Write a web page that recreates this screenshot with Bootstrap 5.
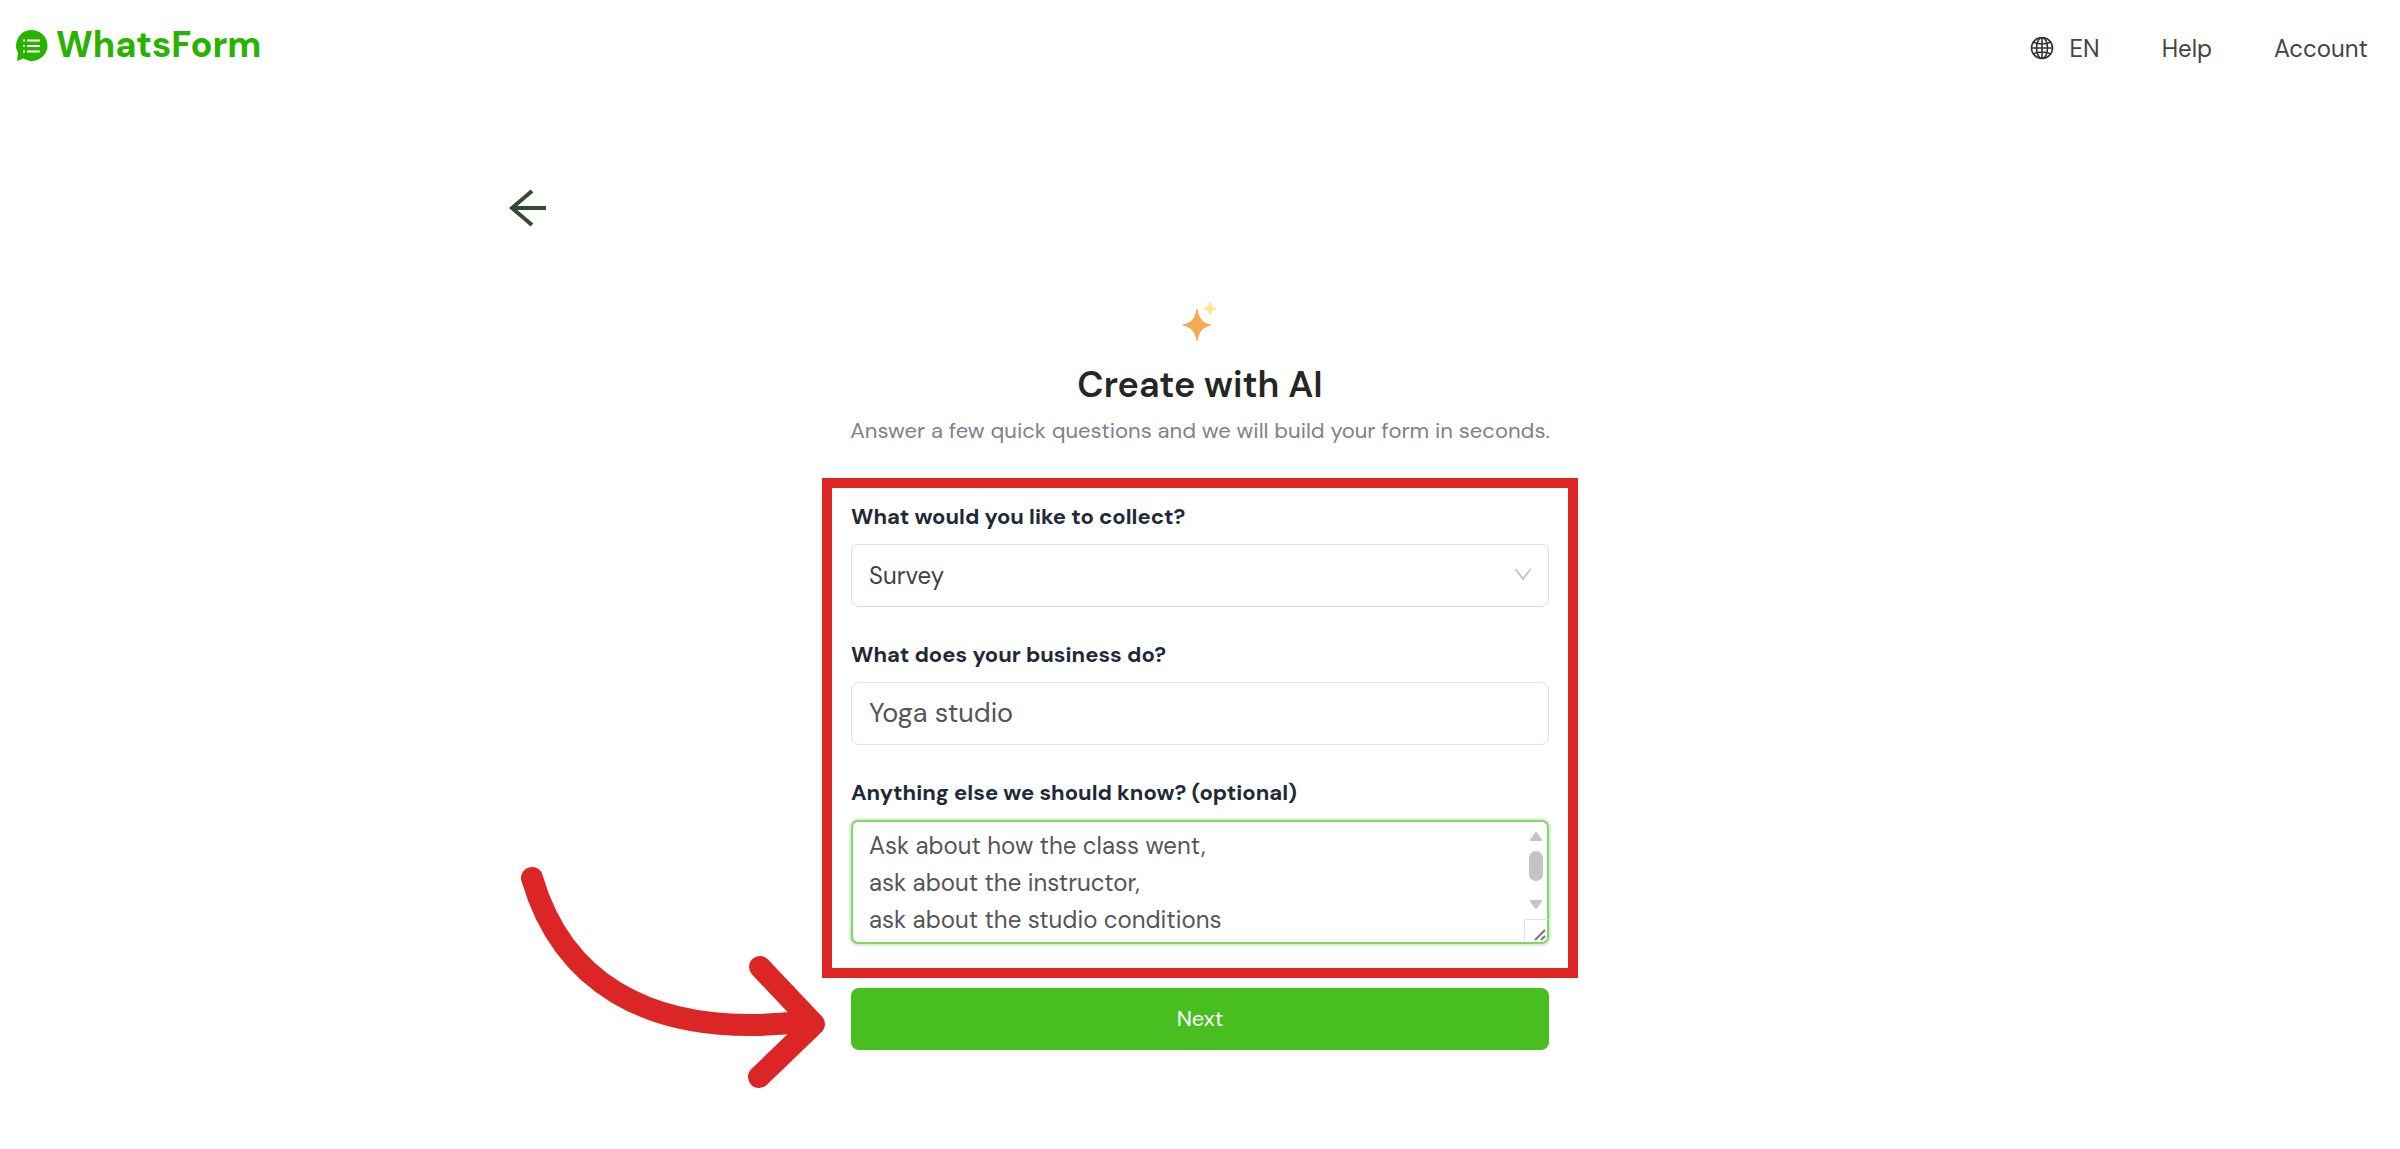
<!DOCTYPE html>
<html lang="en">
<head>
<meta charset="utf-8">
<meta name="viewport" content="width=device-width, initial-scale=1">
<title>WhatsForm - Create with AI</title>
<link href="https://cdn.jsdelivr.net/npm/bootstrap@5.3.0/dist/css/bootstrap.min.css" rel="stylesheet">
<style>
  body { font-family: "DM Sans", Inter, sans-serif; color: #444; background: #fff; font-size: 24px; }
  .site-bar { padding: 22px 32px 0 15px; }
  .brand-name { font-weight: 800; font-size: 36px; line-height: 46px; color: #2ab200; }
  .site-links { gap: 62px; padding-top: 5px; }
  .site-links a { color: #444; line-height: 44px; }
  .page-wrap { max-width: 1392px; padding-top: 109px; padding-bottom: 88px; }
  .wizard { max-width: 756px; }
  .spark { margin-top: 69px; }
  .wizard-title { font-size: 36px; line-height: 44px; font-weight: 600; color: #262626; margin: 20px 0 6px; }
  .wizard-sub { font-size: 22px; line-height: 36px; color: #7c828c; margin: 0 0 29px; white-space: nowrap; }
  .red-frame { border: 10px solid #dc2626; padding: 13px 19px 24px; }
  .field-label { font-size: 22px; line-height: 32px; font-weight: 700; color: #1f2937; margin: 0 0 11px; display: block; }
  .field-block { margin-bottom: 32px; }
  .field-box.form-control, .field-box.form-select { height: 63px; border: 1px solid #dcdcdc; border-radius: 8px; padding: 0 17px; font-size: 24px; color: #404040; box-shadow: none; }
  .field-box.form-select { background-image: none; }
  .field-box.field-large { font-size: 27px; color: #555; border-color: #e4e4e4; padding-bottom: 2px; }
  textarea.field-box.form-control { height: 124px; line-height: 37px; padding: 5px 16px; color: #555; overflow: hidden; resize: none; border: 2px solid #84d46d; border-radius: 7px; box-shadow: 0 0 0 2px #daf2d2; display: block; }
  .caret { right: 17px; top: 24px; pointer-events: none; }
  .scroller { right: 1px; top: 2px; pointer-events: none; }
  .next-btn, .next-btn:hover { background: #49be1f; color: #fff; font-size: 22px; height: 62px; border: 0; border-radius: 8px; padding: 0 0 2px; }
  .next-row { padding: 10px 29px 0; }
  .pointer-arrow { left: -301px; bottom: -38px; pointer-events: none; }
</style>
<script src="https://cdn.jsdelivr.net/npm/bootstrap@5.3.0/dist/js/bootstrap.bundle.min.js"></script>
</head>
<body>
<header class="site-bar d-flex justify-content-between align-items-start">
  <a href="#" class="d-flex align-items-center text-decoration-none gap-2">
    <svg width="33" height="33" viewBox="0 0 33 33" aria-hidden="true">
      <path d="M17 1a15.500 15.500 0 1 1-8.500 28.500L2 32l1-8A15.500 15.500 0 0 1 17 1z" fill="#2ab200"/>
      <path d="M12 11.500H25M12 17H25M12 22.500H25" stroke="#fff" stroke-width="2"/>
      <path d="M8 11.500H10M8 17H10M8 22.500H10" stroke="#fff" stroke-width="2"/>
    </svg>
    <span class="brand-name">WhatsForm</span>
  </a>
  <nav class="site-links d-flex">
    <a href="#" class="d-flex align-items-center text-decoration-none gap-3">
      <svg width="24" height="24" viewBox="0 0 24 24" fill="none" stroke="#333" stroke-width="1.600" aria-hidden="true">
        <circle cx="12" cy="11" r="10.500"/><ellipse cx="12" cy="11" rx="5.500" ry="10.500"/>
        <path d="M12 0v22M1 11h22M3 5q9 4 18 0M3 17q9-4 18 0"/>
      </svg>EN</a>
    <a href="#" class="text-decoration-none">Help</a>
    <a href="#" class="text-decoration-none">Account</a>
  </nav>
</header>

<main class="page-wrap mx-auto">
  <a href="#" class="d-inline-block lh-1 align-top" aria-label="Back">
    <svg class="d-block" width="48" height="48" viewBox="0 0 48 48" fill="none" stroke="#37492f" stroke-width="4" aria-hidden="true"><path d="M28 11L8 28L28 45M7 28H42"/></svg>
  </a>
  <div class="wizard position-relative mx-auto">
    <div class="text-center">
      <svg class="spark d-block mx-auto" width="40" height="46" viewBox="0 0 40 46" aria-hidden="true">
        <path d="M17 12.500C19 22 22 26 30.500 28C22 30.500 19 34 17 43.500C15 34 12 30.500 3 28C12 26 15 22 17 12.500z" fill="#f3aa52" stroke="#f3aa52"/>
        <path d="M30 5C31 9 32 10.500 36 11.500C32 12.500 31 14 30 18C29 14 28 12.500 24 11.500C28 10.500 29 9 30 5z" fill="#fbe77c" stroke="#fbe77c"/>
      </svg>
      <h1 class="wizard-title">Create with AI</h1>
      <p class="wizard-sub">Answer a few quick questions and we will build your form in seconds.</p>
    </div>
    <form>
      <div class="red-frame">
        <div class="field-block">
          <label class="field-label" for="collect">What would you like to collect?</label>
          <div class="position-relative">
            <select id="collect" class="form-select field-box"><option>Survey</option></select>
            <svg class="caret position-absolute" width="18" height="14" viewBox="0 0 18 14" fill="none" stroke="#c4c4c4" stroke-width="1.800" aria-hidden="true"><path d="M1.500 1L9 11L16.500 1"/></svg>
          </div>
        </div>
        <div class="field-block">
          <label class="field-label" for="business">What does your business do?</label>
          <input id="business" type="text" class="form-control field-box field-large" value="Yoga studio">
        </div>
        <div>
          <label class="field-label" for="details">Anything else we should know? (optional)</label>
          <div class="position-relative">
            <textarea id="details" class="form-control field-box" rows="3">Ask about how the class went,
ask about the instructor,
ask about the studio conditions</textarea>
            <svg class="scroller position-absolute" width="24" height="120" viewBox="0 0 24 120" aria-hidden="true">
              <g fill="#c4c4c4" stroke="#c4c4c4" stroke-width="2" stroke-linejoin="round"><path d="M7 18L12 11L17 18zM7 79L12 86L17 79z"/></g>
              <rect x="5" y="29" width="14" height="30" rx="7" fill="#c4c4c4"/>
              <path d="M.500 120V97.500H24" fill="none" stroke="#e2e2e2"/>
              <path d="M11 118L21 108M17 118L21 114" stroke="#777" stroke-width="2"/>
            </svg>
          </div>
        </div>
      </div>
      <div class="next-row"><button type="submit" class="btn next-btn w-100">Next</button></div>
    </form>
    <svg class="pointer-arrow position-absolute" width="305" height="222" viewBox="521 866 305 222" fill="none" stroke="#dc2626" stroke-width="22" stroke-linecap="round" stroke-linejoin="round" aria-hidden="true">
      <path d="M532 878C560 974 640 1040 800 1022M760 967L814 1024L759 1077"/>
    </svg>
  </div>
</main>
</body>
</html>
